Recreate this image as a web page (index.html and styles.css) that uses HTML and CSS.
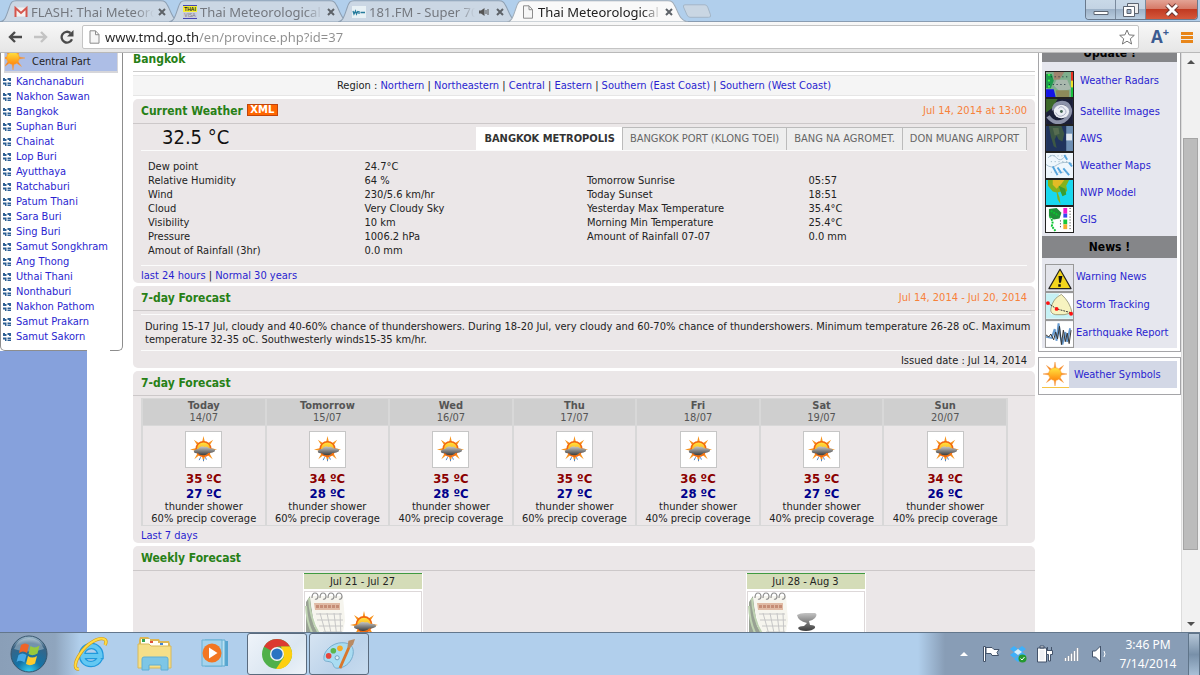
FILE: index.html
```html
<!DOCTYPE html>
<html lang="en">
<head>
    <meta charset="UTF-8">
    <meta name="viewport" content="width=device-width, initial-scale=1.0">
    <title>Thai Meteorological Department</title>
    <link rel="stylesheet" href="styles.css">
</head>
<body>
    <!-- shared icons -->
    <svg class="defs" width="0" height="0">
        <defs>
            <linearGradient id="g-sun" x1="0" y1="0" x2="0" y2="1"><stop offset="0" stop-color="#ffe640"/><stop offset="1" stop-color="#ff8a10"/></linearGradient>
            <linearGradient id="g-cloud" x1="0" y1="0" x2="0" y2="1"><stop offset="0" stop-color="#c4c4c4"/><stop offset="1" stop-color="#3c3c3c"/></linearGradient>
            <radialGradient id="g-orb" cx=".5" cy="1" r="1"><stop offset="0" stop-color="#35d4f5"/><stop offset=".35" stop-color="#1374a8"/><stop offset=".8" stop-color="#3a6384"/><stop offset="1" stop-color="#a9c3d3"/></radialGradient>
        </defs>
        <symbol id="sun" viewBox="0 0 24 24">
            <path d="M12 0l1 6h-2zM12 24l1-6h-2zM0 12l6-1v2zM24 12l-6-1v2zM3.500 3.500l5 3.500-1.500 1.500zM20.500 3.500l-5 3.500 1.500 1.500zM3.500 20.500l5-3.500-1.500-1.500zM20.500 20.500l-5-3.500 1.500-1.500z" fill="#f58220" stroke="#f7a04a" stroke-width=".5"/>
            <circle cx="12" cy="12" r="6.300" fill="url(#g-sun)" stroke="#ff9a1c" stroke-width=".6"/>
        </symbol>
        <symbol id="storm" viewBox="0 0 30 30">
            <path d="M15 1l1.600 7h-3.200zM15 28l1.600-6h-3.200zM1 15l7-1.600v3.200zM29 15l-7-1.600v3.200zM5 5l6.300 4-2.300 2.300zM25 5l-6.300 4 2.300 2.300zM5.500 25l5-4-2-1.500zM24.500 25l-5-4 2-1.500z" fill="#f7931e"/>
            <circle cx="15" cy="14.500" r="7.600" fill="url(#g-sun)" stroke="#f2660e" stroke-width="1.600"/>
            <path d="M5 17c0-2 4-2 5-3 1-2 4-2.500 6-1.500 2-.8 4 0 4.500 1.200 3-.2 6.500.5 6.500 2.300s-5 2.600-7 2.600c-1 1.600-3 2.400-6 2.400-3 0-4-1-4.500-2C7 19 5 18.500 5 17z" fill="url(#g-cloud)"/>
            <path d="M12 23l-1.500 3M17 23l1 2.500M15 25v2" stroke="#4b84c8" stroke-width="1" fill="none"/>
        </symbol>
        <symbol id="squares" viewBox="0 0 8 8">
            <path d="M0 0h2v3H0zM2 1h1.500v2H2zM4.500 0H8v3H6V2H4.500zM0 4.500h3.500V8H2V6.500H0zM4.500 4.500H8V6H4.500zM4.500 6.500H8V8H4.500z" fill="#2c5f93"/>
        </symbol>
        <symbol id="page" viewBox="0 0 11 14">
            <path d="M1 .8h5.500L10 4.500v8.700H1zM6.500.8v3.900H10" fill="#f6f6f6" stroke="#8c8c8c"/>
        </symbol>
        <symbol id="calendar" viewBox="0 0 42 46">
            <path d="M5 4L1 10v36h16L9 34z" fill="#98a193"/>
            <path d="M5 4h33l2 25-3 17H17Q7 28 5 4z" fill="#f6f5ee"/>
            <path d="M4 6Q5 30 17 46M1 14Q2 34 10 46" fill="none" stroke="#bfd3b2" stroke-width="2"/>
            <path d="M9 11h26v7H10z" fill="#e0baa4"/>
            <path d="M11 14.500h23" stroke="#c58d76" stroke-width="3" stroke-dasharray="3 1"/>
            <path d="M11 22h26M12 28h26M14 34h24M18 40h19M15 21l7 25M22 21l5 25M29 21l3 25M35 21l1 25" stroke="#c6c6c6" fill="none"/>
            <g fill="none" stroke="#8f8f8f" stroke-width="1.200"><path d="M7 6q0-5 3-5t3 4q-1 3-3 2"/><path d="M15 6q0-5 3-5t3 4q-1 3-3 2"/><path d="M23 6q0-5 3-5t3 4q-1 3-3 2"/><path d="M31 6q0-5 3-5t3 4q-1 3-3 2"/></g>
        </symbol>
        <symbol id="tab-shape" viewBox="0 0 180 22">
            <path d="M0 22C5 21 6 17 9 8 11 2 12 .8 16 .8H160C164 .8 165 2 168 8 171 15 173 21 180 22z"/>
        </symbol>
    </svg>

    <header class="titlebar">
        <nav class="tabs">
            <div class="tab">
                <svg class="tab-bg" preserveAspectRatio="none" viewBox="0 0 180 22"><use href="#tab-shape"/></svg>
                <svg class="fav" viewBox="0 0 14 12"><path d="M1 1.500h12v9H1z" fill="#f4f0ef"/><path d="M1.500 11V2L7 7l5.500-5v9" fill="none" stroke="#d5564d" stroke-width="2"/></svg>
                <span class="tab-title">FLASH: Thai Meteorological</span>
                <button class="tab-close" aria-label="Close tab"><svg viewBox="0 0 8 8"><path d="M1 1l6 6M7 1L1 7"/></svg></button>
            </div>
            <div class="tab">
                <svg class="tab-bg" preserveAspectRatio="none" viewBox="0 0 180 22"><use href="#tab-shape"/></svg>
                <span class="fav fav-visa"><b>THAI</b><i>VISA</i></span>
                <span class="tab-title">Thai Meteorological</span>
                <button class="tab-close" aria-label="Close tab"><svg viewBox="0 0 8 8"><path d="M1 1l6 6M7 1L1 7"/></svg></button>
            </div>
            <div class="tab">
                <svg class="tab-bg" preserveAspectRatio="none" viewBox="0 0 180 22"><use href="#tab-shape"/></svg>
                <svg class="fav" viewBox="0 0 14 12"><path d="M0 0h14v12H0z" fill="#e8f1f5"/><path d="M1 5l1 3 1.500-3 1 3L6 5M7 5v3M8.500 6.500H13" stroke="#267b9c" stroke-width="1.300" fill="none"/></svg>
                <span class="tab-title">181.FM - Super 70s</span>
                <svg class="speaker" viewBox="0 0 10 10"><path d="M0 3.500h2L5.500 1v8L2 6.500H0z" fill="#555"/><path d="M7 3v4M9 2v6" stroke="#555"/></svg>
                <button class="tab-close" aria-label="Close tab"><svg viewBox="0 0 8 8"><path d="M1 1l6 6M7 1L1 7"/></svg></button>
            </div>
            <div class="tab current">
                <svg class="tab-bg" preserveAspectRatio="none" viewBox="0 0 180 22"><use href="#tab-shape"/></svg>
                <svg class="fav"><use href="#page"/></svg>
                <span class="tab-title">Thai Meteorological</span>
                <button class="tab-close" aria-label="Close tab"><svg viewBox="0 0 8 8"><path d="M1 1l6 6M7 1L1 7"/></svg></button>
            </div>
        </nav>
        <button class="new-tab" aria-label="New tab"><svg viewBox="0 0 30 14"><path d="M3 .8h20q2 0 3 3l2.500 7q1 2.500-2 2.500H8Q6 13.300 5 11L1.500 3Q.8.800 3 .8z" fill="#c9d6e3" stroke="#a3b6c8"/></svg></button>
        <div class="win-buttons">
            <button aria-label="Minimize"><svg viewBox="0 0 16 14"><path d="M1 8.500h14v3H1z" fill="#fff" stroke="#5c6470"/></svg></button>
            <button aria-label="Restore"><svg viewBox="0 0 16 14"><path d="M4.500.5h11v10h-11z" fill="#eee" stroke="#5c6470"/><path d="M.5 3.500h11v10H.5z" fill="#fff" stroke="#5c6470"/><path d="M4 6.500h4v4H4z" fill="#9fb3c9" stroke="#5c6470"/></svg></button>
            <button class="win-close" aria-label="Close"><svg viewBox="0 0 16 14"><path d="M3 2l10 10M13 2L3 12" stroke="#6b3530" stroke-width="5"/><path d="M3 2l10 10M13 2L3 12" stroke="#fff" stroke-width="3"/></svg></button>
        </div>
    </header>

    <div class="toolbar">
        <button aria-label="Back"><svg viewBox="0 0 14 12"><path d="M14 6H2M7 1L2 6l5 5" fill="none" stroke="#4a4a4a" stroke-width="2.400"/></svg></button>
        <button aria-label="Forward"><svg viewBox="0 0 14 12"><path d="M0 6h12M7 1l5 5-5 5" fill="none" stroke="#c3c3c3" stroke-width="2.400"/></svg></button>
        <button aria-label="Reload"><svg viewBox="0 0 14 14"><path d="M12 9.300A5.400 5.400 0 1 1 10.500 3" fill="none" stroke="#4a4a4a" stroke-width="2.300"/><path d="M13.500 0v6.500H7z" fill="#4a4a4a"/></svg></button>
        <div class="address">
            <svg class="page-icon"><use href="#page"/></svg>
            <input type="text" aria-label="Address" value="www.tmd.go.th/en/province.php?id=37">
            <button aria-label="Bookmark"><svg viewBox="0 0 16 16"><path d="M8 1l2.100 4.900 5.200.4-4 3.500 1.300 5.200L8 12.200 3.400 15l1.300-5.200-4-3.500 5.200-.4z" fill="#fff" stroke="#777"/></svg></button>
        </div>
        <button class="font-size" aria-label="Text size">A<sup>+</sup></button>
        <button class="menu-btn" aria-label="Menu"><i></i><i></i><i></i></button>
    </div>

    <div class="viewport">
        <aside class="left">
            <div class="region-box">
                <div class="region-head"><svg><use href="#sun"/></svg>Central Part</div>
                <ul>
                    <li><svg><use href="#squares"/></svg><a href="#">Kanchanaburi</a></li>
                    <li><svg><use href="#squares"/></svg><a href="#">Nakhon Sawan</a></li>
                    <li><svg><use href="#squares"/></svg><a href="#">Bangkok</a></li>
                    <li><svg><use href="#squares"/></svg><a href="#">Suphan Buri</a></li>
                    <li><svg><use href="#squares"/></svg><a href="#">Chainat</a></li>
                    <li><svg><use href="#squares"/></svg><a href="#">Lop Buri</a></li>
                    <li><svg><use href="#squares"/></svg><a href="#">Ayutthaya</a></li>
                    <li><svg><use href="#squares"/></svg><a href="#">Ratchaburi</a></li>
                    <li><svg><use href="#squares"/></svg><a href="#">Patum Thani</a></li>
                    <li><svg><use href="#squares"/></svg><a href="#">Sara Buri</a></li>
                    <li><svg><use href="#squares"/></svg><a href="#">Sing Buri</a></li>
                    <li><svg><use href="#squares"/></svg><a href="#">Samut Songkhram</a></li>
                    <li><svg><use href="#squares"/></svg><a href="#">Ang Thong</a></li>
                    <li><svg><use href="#squares"/></svg><a href="#">Uthai Thani</a></li>
                    <li><svg><use href="#squares"/></svg><a href="#">Nonthaburi</a></li>
                    <li><svg><use href="#squares"/></svg><a href="#">Nakhon Pathom</a></li>
                    <li><svg><use href="#squares"/></svg><a href="#">Samut Prakarn</a></li>
                    <li><svg><use href="#squares"/></svg><a href="#">Samut Sakorn</a></li>
                </ul>
            </div>
            <div class="left-fill"></div>
        </aside>

        <main>
            <h1>Bangkok</h1>
            <div class="regions">Region : <a href="#">Northern</a> | <a href="#">Northeastern</a> | <a href="#">Central</a> | <a href="#">Eastern</a> | <a href="#">Southern (East Coast)</a> | <a href="#">Southern (West Coast)</a></div>

            <section class="panel">
                <div class="panel-head"><h2>Current Weather</h2><a class="xml" href="#">XML</a><span class="date">Jul 14, 2014 at 13:00</span></div>
                <div class="now">
                    <span class="temp">32.5 °C</span>
                    <div class="stations">
                        <button class="active">BANGKOK METROPOLIS</button>
                        <button>BANGKOK PORT (KLONG TOEI)</button>
                        <button>BANG NA AGROMET.</button>
                        <button>DON MUANG AIRPORT</button>
                    </div>
                </div>
                <table class="details">
                    <tr><td>Dew point</td><td>24.7°C</td><td></td><td></td></tr>
                    <tr><td>Relative Humidity</td><td>64 %</td><td>Tomorrow Sunrise</td><td>05:57</td></tr>
                    <tr><td>Wind</td><td>230/5.6 km/hr</td><td>Today Sunset</td><td>18:51</td></tr>
                    <tr><td>Cloud</td><td>Very Cloudy Sky</td><td>Yesterday Max Temperature</td><td>35.4°C</td></tr>
                    <tr><td>Visibility</td><td>10 km</td><td>Morning Min Temperature</td><td>25.4°C</td></tr>
                    <tr><td>Pressure</td><td>1006.2 hPa</td><td>Amount of Rainfall 07-07</td><td>0.0 mm</td></tr>
                    <tr><td>Amout of Rainfall (3hr)</td><td>0.0 mm</td><td></td><td></td></tr>
                </table>
                <div class="more"><a href="#">last 24 hours</a> | <a href="#">Normal 30 years</a></div>
            </section>

            <section class="panel">
                <div class="panel-head"><h2>7-day Forecast</h2><span class="date">Jul 14, 2014 - Jul 20, 2014</span></div>
                <p class="summary">During 15-17 Jul, cloudy and 40-60% chance of thundershowers. During 18-20 Jul, very cloudy and 60-70% chance of thundershowers. Minimum temperature 26-28 oC. Maximum temperature 32-35 oC. Southwesterly winds15-35 km/hr.</p>
                <div class="issued">Issued date : Jul 14, 2014</div>
            </section>

            <section class="panel">
                <div class="panel-head"><h2>7-day Forecast</h2></div>
                <table class="forecast">
                    <thead>
                        <tr>
                            <th>Today<span>14/07</span></th>
                            <th>Tomorrow<span>15/07</span></th>
                            <th>Wed<span>16/07</span></th>
                            <th>Thu<span>17/07</span></th>
                            <th>Fri<span>18/07</span></th>
                            <th>Sat<span>19/07</span></th>
                            <th>Sun<span>20/07</span></th>
                        </tr>
                    </thead>
                    <tbody>
                        <tr>
                            <td><svg><use href="#storm"/></svg><b class="max">35 ºC</b><b class="min">27 ºC</b>thunder shower<br>60% precip coverage</td>
                            <td><svg><use href="#storm"/></svg><b class="max">34 ºC</b><b class="min">28 ºC</b>thunder shower<br>60% precip coverage</td>
                            <td><svg><use href="#storm"/></svg><b class="max">35 ºC</b><b class="min">28 ºC</b>thunder shower<br>40% precip coverage</td>
                            <td><svg><use href="#storm"/></svg><b class="max">35 ºC</b><b class="min">27 ºC</b>thunder shower<br>60% precip coverage</td>
                            <td><svg><use href="#storm"/></svg><b class="max">36 ºC</b><b class="min">28 ºC</b>thunder shower<br>40% precip coverage</td>
                            <td><svg><use href="#storm"/></svg><b class="max">35 ºC</b><b class="min">27 ºC</b>thunder shower<br>40% precip coverage</td>
                            <td><svg><use href="#storm"/></svg><b class="max">34 ºC</b><b class="min">26 ºC</b>thunder shower<br>40% precip coverage</td>
                        </tr>
                    </tbody>
                </table>
                <div class="last-days"><a href="#">Last 7 days</a></div>
            </section>

            <section class="panel weekly">
                <div class="panel-head"><h2>Weekly Forecast</h2></div>
                <div class="weeks">
                    <div class="week">
                        <h3>Jul 21 - Jul 27</h3>
                        <div class="week-pic">
                            <svg class="cal"><use href="#calendar"/></svg>
                            <svg class="sky"><use href="#storm"/></svg>
                        </div>
                    </div>
                    <div class="week">
                        <h3>Jul 28 - Aug 3</h3>
                        <div class="week-pic">
                            <svg class="cal"><use href="#calendar"/></svg>
                            <svg class="sky" viewBox="0 0 30 30"><path d="M5 5q3-2 8-2h10q3 1 0 5-3 3-6 3l1 4q6 0 5 3-3 3-9 3-7 0-8-3 1-2 6-2l3-3Q6 11 5 5z" fill="url(#g-cloud)"/><path d="M9 22l-2 3M13 22v4M17 22l-1 3" stroke="#5b93d6" fill="none"/></svg>
                        </div>
                    </div>
                </div>
            </section>
        </main>

        <aside class="right">
            <div class="link-box">
                <h4 class="cut"><span>Update !</span></h4>
                <ul class="updates">
                    <li><svg viewBox="0 0 28 26"><path fill="#7fae8c" d="M0 0h28v26H0z"/><path fill="#a0836f" d="M8 0h11l-5 8H8z"/><path fill="#a9b8ad" d="M11 8h11l4 10-12 2-6-6z"/><path fill="#1f9a4e" d="M0 2h6l2 7-3 8H0z"/><path fill="#1414e6" d="M0 18h8l2 8H0z"/><path fill="#8c8a5a" d="M10 19h14v7H11z"/><path stroke="#39ff43" stroke-width="2" stroke-dasharray="2 4" d="M3 2v15"/><path stroke="#123" stroke-dasharray="1 3" d="M5 5h18M3 13h20"/><path fill="#ee2c1c" d="M26 0h2v9h-2z"/><path fill="#f3e321" d="M26 9h2v7h-2z"/><path fill="#15c23b" d="M26 16h2v10h-2z"/></svg><a href="#">Weather Radars</a></li>
                    <li><svg viewBox="0 0 28 26"><path fill="#1b1f38" d="M0 0h28v26H0z"/><path fill="#3c6829" d="M0 0h12L7 9l-7 5z"/><path fill="none" stroke="#8d93aa" stroke-width="4" d="M2 18q7 9 16 5 8-5 7-12-2-8-10-7-7 1-7 8"/><ellipse cx="16" cy="13" rx="8" ry="7" fill="#eceef4"/><path fill="none" stroke="#a5aac2" d="M10 14q3 6 8 3t1-7-6 0"/><circle cx="16" cy="13" r="1.500" fill="#465"/></svg><a href="#">Satellite Images</a></li>
                    <li><svg viewBox="0 0 28 26"><path fill="#20345d" d="M0 0h28v26H0z"/><path fill="#3c5744" d="M3 0h13l3 8-2 8-4-2-2-4-2 4 2 9-3-2-3-10z"/><path fill="#566c50" d="M7 2h6l1 6-5 2z"/><path fill="#6e8fb3" d="M21 0h7v26h-7z"/><path fill="#e1e8ee" d="M21 8h6v7h-6z"/></svg><a href="#">AWS</a></li>
                    <li><svg viewBox="0 0 28 26"><path fill="#eef6fc" d="M0 0h28v26H0z"/><path fill="none" stroke="#a7bfd0" d="M2 5q5-5 9 0t9-2M0 12q6 5 12 0 6-4 15-1"/><path fill="none" stroke="#53a4de" stroke-width="2" d="M7 14l5 9M12 15l4 6M19 2l3 5M18 16l6 7M24 10l3 4"/><path fill="none" stroke="#8ab" stroke-dasharray="1 3" d="M4 3h20M5 9h18M5 20h18"/></svg><a href="#">Weather Maps</a></li>
                    <li><svg viewBox="0 0 28 26"><path fill="#18d8ee" d="M0 0h28v26H0z"/><path fill="#85b21c" d="M2 0h22l-3 6 1 5-4 5-3-4-3 1 2 5 1 7-3-5-1-7-4-1-5-6z"/><path fill="#e4bb25" d="M7 0h12l-3 4-5 5-4-4z"/><path fill="#3a9d32" d="M13 6l7 3 1 6-4 2z"/></svg><a href="#">NWP Model</a></li>
                    <li><svg viewBox="0 0 28 26"><path fill="#fff" d="M0 0h28v26H0z"/><path fill="#218e39" d="M3 2l8-1 5 5-2 6-6 1-5-3z"/><path fill="none" stroke="#0cc331" stroke-width="2" stroke-dasharray="2 1" d="M5 4l8 5M4 10l3 5-1 5 4 5"/><path fill="#f119cc" d="M18 1h4v6h-4z"/><path fill="#3648ef" d="M18 7h4v4h-4z"/><path fill="#16c83b" d="M18 13h4v5h-4z"/><path fill="#f4ae30" d="M18 18h4v5h-4z"/><path stroke="#222" stroke-dasharray="1 2" d="M25 1v22M15 14v8"/></svg><a href="#">GIS</a></li>
                </ul>
                <h4>News !</h4>
                <ul class="news">
                    <li><svg viewBox="0 0 28 26"><path fill="#e3e4ea" d="M0 0h28v26H0z"/><path fill="#f3d51c" stroke="#222" stroke-width="1.200" stroke-linejoin="round" d="M14.500 4L26 24H3z"/><path fill="#111" d="M13 11h4l-1.500 7h-2zM12.700 19.500h2.600v2.500h-2.600z"/></svg><a href="#">Warning News</a></li>
                    <li><svg viewBox="0 0 28 26"><path fill="#fff" d="M0 0h28v26H0z"/><path fill="#c6f1f5" d="M0 0h14L4 17l2 9H0zM0 22l28-2v6H0z"/><path fill="#f7f3c0" stroke="#8a8a6a" stroke-width=".8" d="M5 16Q7 5 16 1q9 8 11 19-8 3-17 2-6-1-5-6z"/><path fill="none" stroke="#333" stroke-dasharray="2 1" d="M2 10l9 6 15 4"/><circle cx="2" cy="10" r="2" fill="#f11"/><circle cx="11" cy="16" r="2" fill="#f11"/><circle cx="26" cy="21" r="2" fill="#f11"/></svg><a href="#">Storm Tracking</a></li>
                    <li><svg viewBox="0 0 28 26"><path fill="#fff" d="M0 0h28v26H0z"/><path fill="none" stroke="#679bd0" stroke-width="2" d="M0 16l6 1 3-9 2 12 2-18 2 14 2 8 3-13 2 10 3-14"/><path fill="none" stroke="#333" d="M0 14l3 2 2-3 3 6 2-8 2 7 2-13 2 19 2-15 2 12 2-9 2 11 2-14"/></svg><a href="#">Earthquake Report</a></li>
                </ul>
            </div>
            <div class="link-box symbols">
                <div class="symbols-row"><span class="symbols-icon"><svg><use href="#sun"/></svg></span><a href="#">Weather Symbols</a></div>
            </div>
        </aside>

        <div class="scrollbar">
            <i class="arrow up"></i>
            <div class="track"><div class="thumb"></div></div>
            <i class="arrow down"></i>
        </div>
    </div>

    <footer class="taskbar">
        <button class="start" aria-label="Start"><svg viewBox="0 0 38 38"><circle cx="19" cy="19" r="18" fill="url(#g-orb)" stroke="#35546c"/><path d="M4 14Q8 3 19 3t15 11q-15 5-30 0z" fill="#fff" opacity=".3"/><path d="M11 10q4-3 8 0l-2 8q-4-3-8 0z" fill="#ee6428"/><path d="M20.500 11q4 3 9-.5l-2 8q-5 3-9 .5z" fill="#98c93c"/><path d="M8.500 20q4-3 8 0l-2 7.500q-4-3-8-.5z" fill="#46a9e6"/><path d="M18 21q4 3 9 0l-2 7.500q-5 3-9 .5z" fill="#fecb2e"/></svg></button>
        <button class="ie" aria-label="Internet Explorer"><svg viewBox="0 0 36 36"><path d="M28 22c-2 4-5 6-9 6-6 0-9-4-9-9s4-9 9.500-9c5 0 9 4 9 10H11" fill="none" stroke="#2199dc" stroke-width="6.500"/><path d="M28 22c-2 4-5 6-9 6-6 0-9-4-9-9s4-9 9.500-9c5 0 9 4 9 10H11" fill="none" stroke="#64c8f2" stroke-width="4"/><path d="M7 33c-5 1-5-6 1-15C15 7 27 1 32 3c3 1 2 4 1 6" fill="none" stroke="#d69d17" stroke-width="3.300"/><path d="M7 33c-5 1-5-6 1-15C15 7 27 1 32 3c3 1 2 4 1 6" fill="none" stroke="#ffdb45" stroke-width="2"/></svg></button>
        <button class="explorer" aria-label="Explorer"><svg viewBox="0 0 36 36"><path d="M3 4l1-3h8l2 2h9l1 2h9l1 3v22H3z" fill="#dcb653"/><path d="M5 3h9v5H5zM13 5h9v5h-9zM22 7h10v5H22z" fill="#fffef4"/><path d="M6 3h3v3H6z" fill="#32a653"/><path d="M14 5h3v2h-3z" fill="#e1513c"/><path d="M24 7h3v2h-3z" fill="#4285d5"/><path d="M2 8h11l2 2h20v22H2z" fill="#f5df89" stroke="#d8b95a"/><path d="M6 34V23q0-2 2-2h22q2 0 2 2v11h-7v-5H13v5z" fill="#7dc6e6" stroke="#60aed4"/></svg></button>
        <button class="player" aria-label="Media Player"><svg viewBox="0 0 32 32"><path d="M8 3h20v25H8z" fill="#56a5d0"/><path d="M5 2h20v26H5z" fill="#b9e1f2" stroke="#5eabd1"/><path d="M2 2h20v26H2z" fill="#a5d3ec" stroke="#69b1d3"/><circle cx="12" cy="15" r="9.500" fill="#f27622"/><path d="M9 9.500v11l8.500-5.500z" fill="#fff"/></svg></button>
        <button class="app open" aria-label="Chrome"><svg viewBox="0 0 32 32"><circle cx="16" cy="16" r="15" fill="#4fb04a"/><path d="M16 16L3 8.500A15 15 0 0 1 29 8.500H16z" fill="#dc3a30"/><path d="M29 8.500A15 15 0 0 1 15 31l8-12-3-10.500z" fill="#fdcf10"/><circle cx="16" cy="16" r="7" fill="#f4f4f4"/><circle cx="16" cy="16" r="5.600" fill="#2a73c2"/></svg></button>
        <button class="app" aria-label="Paint"><svg viewBox="0 0 34 34"><path d="M1 22C0 14 10 5 20 5s13 5 12 12-7 14-15 15c-7 1-5-4-8-6s-8 0-8-4z" fill="#a9dcf2" stroke="#72aacb"/><circle cx="6" cy="19" r="3" fill="#e7453c"/><circle cx="11" cy="13.500" r="3" fill="#5bb64d"/><circle cx="18" cy="11" r="3" fill="#f6ab28"/><circle cx="15" cy="21" r="2.200" fill="#dceef6" stroke="#6e9dbb"/><path d="M28 9L18 32" stroke="#d9772b" stroke-width="3"/><path d="M26 9l1-6 7-2-2 6-4 4z" fill="#b98a63"/></svg></button>

        <div class="tray">
            <i class="tray-up"></i>
            <svg viewBox="0 0 18 18"><path d="M1.500 1.500h2v15h-2z" fill="#fff" stroke="#43536a"/><path d="M4 2.500h6l2 2h5l-2 3 1.500 3H10l-1-2H4z" fill="#fff" stroke="#43536a"/></svg>
            <svg viewBox="0 0 18 18"><path d="M5 1l4 3-4 3-4-3zM13 1l4 3-4 3-4-3zM5 7l4 3-4 3-4-3zM13 7l4 3-4 3-4-3zM9 11l4 3-4 3-4-3z" fill="#3fb0fa"/><path d="M9 4l4 3-4 3-4-3z" fill="#d6effc"/><circle cx="13.500" cy="13.500" r="4" fill="#24992f"/><path d="M11.500 13.500l1.500 1.500 2.500-3" fill="none" stroke="#fff"/></svg>
            <svg viewBox="0 0 18 18"><path d="M4 1h4v2H4zM1.500 3h9v14h-9z" fill="#fff" stroke="#43536a"/><path d="M3.500 5h5v10h-5z" fill="#eef1f5"/><path d="M10.500 5.500h6v4h-2v6.500h-2V9.500h-2zM11.500 2v3M15.500 2v3" fill="#fff" stroke="#43536a"/></svg>
            <svg viewBox="0 0 18 18"><path d="M2.500 13v3M5.500 11v5M8.500 8.500V16M11.500 6v10M14.500 3v13" stroke="#43536a" stroke-width="3"/><path d="M2.500 13v3M5.500 11v5M8.500 8.500V16M11.500 6v10M14.500 3v13" stroke="#fff" stroke-width="2"/></svg>
            <svg viewBox="0 0 18 18"><path d="M2.500 6h3l5-5v16l-5-5h-3z" fill="#fff" stroke="#43536a"/><path d="M14 6q2 3 0 6" fill="none" stroke="#fff"/></svg>
        </div>
        <div class="clock">3:46 PM<br>7/14/2014</div>
        <button class="show-desktop" aria-label="Show desktop"></button>
    </footer>
</body>
</html>
```
FILE: styles.css
```css
*{
    margin: 0;
    padding: 0;
    box-sizing: border-box;
}
body{
    height: 100vh;
    display: flex;
    flex-direction: column;
    overflow: hidden;
    background: #fff;
    font: 11px/14px "DejaVu Sans Condensed", Tahoma, sans-serif;
    color: #222;
}
.defs{
    position: absolute;
}
ul{
    list-style: none;
}
a{
    color: #2a1fd0;
    text-decoration: none;
}
button{
    border: 0;
    background: none;
    font: inherit;
    color: inherit;
}
svg{
    display: block;
    flex: none;
}

/* window title and tabs */
.titlebar{
    flex: none;
    height: 22px;
    display: flex;
    align-items: flex-start;
    background: #b1cfec;
    border-bottom: 1px solid #8a9db2;
    font: 13px/18px "Noto Sans", "Open Sans", sans-serif;
}
.tabs{
    display: flex;
}
.tab{
    position: relative;
    width: 181px;
    height: 22px;
    margin-right: -12px;
    padding: 2px 15px 0 14px;
    display: flex;
    align-items: center;
    color: #74787f;
}
.tab:last-child{
    margin-right: 0;
}
.tab-bg{
    position: absolute;
    left: 0;
    top: 0;
    width: 100%;
    height: 100%;
    fill: #cbd7e4;
    stroke: #8d9fb2;
}
.current{
    color: #222;
}
.current .tab-bg{
    fill: #f9f9f9;
    stroke: #a2adb8;
}
.fav{
    position: relative;
    width: 14px;
    height: 14px;
    margin-right: 3px;
}
.fav-visa{
    background: #f4ee34;
    border-top: 1px solid #4646b4;
    border-bottom: 1px solid #4646b4;
    font: 5px/6px "Liberation Sans", sans-serif;
    text-align: center;
    color: #222;
}
.fav-visa b, .fav-visa i{
    display: block;
    font-style: normal;
}
.fav-visa i{
    background: #ccd;
    color: #777;
}
.tab-title{
    position: relative;
    flex: 1;
    min-width: 0;
    overflow: hidden;
    white-space: nowrap;
    -webkit-mask-image: linear-gradient(to right, #000 85%, transparent);
    mask-image: linear-gradient(to right, #000 85%, transparent);
}
.tab-close{
    position: relative;
    margin: 0 0 0 4px;
}
.tab-close svg{
    width: 8px;
    height: 8px;
    stroke: #5d6268;
    stroke-width: 2;
}
.speaker{
    position: relative;
    width: 10px;
    height: 10px;
    margin: 0 3px 0 4px;
}
.new-tab{
    margin: 4px 0 0 -6px;
}
.new-tab svg{
    width: 30px;
    height: 14px;
}
.win-buttons{
    margin: 0 2px 0 auto;
    display: flex;
    border: 1px solid #69798c;
    border-top: 0;
    border-radius: 0 0 4px 4px;
    overflow: hidden;
}
.win-buttons button{
    width: 30px;
    height: 19px;
    display: flex;
    justify-content: center;
    align-items: center;
    background: linear-gradient(#c9d9e8, #c3d3e3 45%, #9db2c8 50%, #b9cde0);
    border-right: 1px solid #7a8a9d;
}
.win-buttons .win-close{
    width: 51px;
    border: 0;
    background: linear-gradient(#e3a395, #d67b69 45%, #c13a22 50%, #d5583b);
}
.win-buttons svg{
    width: 16px;
    height: 14px;
}

/* toolbar */
.toolbar{
    flex: none;
    height: 31px;
    padding: 0 7px 0 8px;
    display: flex;
    align-items: center;
    gap: 12px;
    background: linear-gradient(#f8f8f8, #e6e6e6);
    border-bottom: 1px solid #b9b9b9;
}
.toolbar > button svg{
    width: 14px;
    height: 14px;
}
.address{
    flex: 1;
    height: 24px;
    margin-left: -4px;
    padding: 0 3px 0 6px;
    display: flex;
    align-items: center;
    gap: 5px;
    background: #fff;
    border: 1px solid #c4c4c4;
    border-radius: 2px;
}
.page-icon{
    width: 11px;
    height: 14px;
}
.address input{
    flex: 1;
    min-width: 0;
    border: 0;
    outline: 0;
    font: 13px/20px "Noto Sans", "Open Sans", sans-serif;
    /* host dark, path grey */
    color: transparent;
    background: linear-gradient(to right, #222 94px, #8f8f8f 94px);
    -webkit-background-clip: text;
    background-clip: text;
}
.address svg{
    height: 16px;
}
.address button svg{
    width: 16px;
}
.font-size{
    font: bold 17px/20px "Open Sans", sans-serif;
    color: #3a5a90;
    white-space: nowrap;
}
.font-size sup{
    font-size: 11px;
    line-height: 1px;
}
.menu-btn i{
    display: block;
    width: 12px;
    height: 3px;
    margin: 1px 0;
    background: #e8861a;
}

/* page area */
.viewport{
    flex: 1;
    min-height: 0;
    display: flex;
    overflow: hidden;
}
.left{
    flex: none;
    width: 123px;
    display: flex;
    flex-direction: column;
}
.region-box{
    position: relative;
    height: 298px;
    background: #fff;
    border: 1px solid #8d8d8d;
    border-top: 0;
    border-radius: 0 0 5px 5px;
}
.region-box::after{
    /* gap in the bottom line */
    content: "";
    position: absolute;
    left: 86px;
    bottom: -1px;
    width: 23px;
    height: 1px;
    background: #fff;
}
.region-head{
    height: 20px;
    margin: 0 4px 1px 3px;
    display: flex;
    align-items: center;
    gap: 7px;
    background: #adbee6;
    border: solid #d6d6da;
    border-width: 0 1px 2px 1px;
    overflow: hidden;
}
.region-head svg{
    width: 24px;
    height: 24px;
    margin: -8px 0 0 -4px;
}
.region-box li{
    height: 15px;
    padding-left: 2px;
    display: flex;
    align-items: center;
    gap: 5px;
}
.region-box li svg{
    width: 8px;
    height: 8px;
}
.left-fill{
    flex: 1;
    width: 87px;
    background: #86a1dc;
}

main{
    flex: 1;
    min-width: 0;
    margin: 0 3px 0 10px;
    display: flex;
    flex-direction: column;
    gap: 3px;
}
h1{
    flex: none;
    height: 19px;
    border-bottom: 1px solid #ccc;
    font-size: 12px;
    line-height: 12px;
    color: #278016;
}
.regions{
    flex: none;
    height: 21px;
    line-height: 20px;
    text-align: center;
    background: #f5f5f5;
    border-top: 1px solid #e6e6e6;
    border-bottom: 1px solid #e6e6e6;
}
.panel{
    flex: none;
    background: #ebe7e8;
    border-radius: 5px;
}
.panel-head{
    height: 25px;
    padding: 0 8px;
    display: flex;
    align-items: center;
    border-bottom: 1px solid #ccc8c9;
}
h2{
    font-size: 12px;
    line-height: 16px;
    color: #278016;
}
.xml{
    width: 31px;
    height: 12px;
    margin: 0 0 2px 4px;
    background: #f60;
    border: 1px solid #c0450c;
    font: bold 10px/10px "DejaVu Sans", sans-serif;
    text-align: center;
    color: #fff;
}
.date{
    margin-left: auto;
    color: #f7813a;
}
.now{
    height: 27px;
    margin: 0 8px;
    padding-left: 21px;
    display: flex;
    justify-content: space-between;
    align-items: flex-end;
    border-bottom: 1px solid #fbfbfb;
}
.temp{
    font-size: 20px;
    line-height: 26px;
    color: #111;
}
.stations{
    display: flex;
}
.stations button{
    height: 23px;
    padding: 0 7px;
    background: #eee;
    border: 1px solid #bbb;
    border-width: 1px 0 0 1px;
    color: #666;
    white-space: nowrap;
}
.stations button:last-child{
    border-right-width: 1px;
}
.stations .active{
    background: #fff;
    border-color: #fff;
    font-weight: bold;
    color: #333;
}
.details{
    width: calc(100% - 16px);
    margin: 9px 8px 7px;
    table-layout: fixed;
    border-collapse: collapse;
}
.details td{
    width: 25%;
    height: 14px;
    padding-left: 3px;
}
.details td:first-child{
    padding-left: 7px;
}
.details td:nth-child(2){
    padding-left: 2px;
}
.more, .last-days{
    margin: 0 8px;
    height: 18px;
    line-height: 20px;
}
.more{
    border-top: 1px solid #fbfbfb;
}
.summary{
    margin: 3px 4px 0 8px;
    padding: 5px 0 4px 4px;
    line-height: 13px;
    border-top: 1px solid #fbfbfb;
    border-bottom: 1px solid #fbfbfb;
}
.issued{
    height: 17px;
    padding-right: 8px;
    line-height: 20px;
    text-align: right;
}
.forecast{
    width: calc(100% - 35px);
    margin: 2px 8px 0;
    table-layout: fixed;
    border-collapse: collapse;
    line-height: 12px;
    text-align: center;
}
.forecast th, .forecast td{
    border: 1px solid #d8d8d8;
    border-width: 1px 2px;
}
.forecast th{
    height: 27px;
    background: #cfcfcf;
    color: #555;
}
.forecast th span{
    display: block;
    font-weight: normal;
}
.forecast td{
    padding: 5px 0 0;
    white-space: nowrap;
}
.forecast svg{
    width: 37px;
    height: 37px;
    margin: 0 auto 3px;
    padding: 3px;
    background: #fff;
    border: 1px solid #c6c6c6;
}
.forecast b{
    display: block;
    font-size: 13px;
    line-height: 15px;
}
.max{
    color: #8b0000;
}
.min{
    color: #00008b;
}
.last-days{
    height: 17px;
}
.weeks{
    padding: 2px 8px 0;
    display: grid;
    grid-template-columns: 1fr 1fr;
    justify-items: center;
}
.week{
    width: 120px;
    padding: 0 1px;
    background: #fff;
}
.week h3{
    height: 16px;
    margin-bottom: 2px;
    background: #d4dcb8;
    border-top: 1px solid #3f9a3f;
    font-size: 11px;
    font-weight: normal;
    line-height: 15px;
    text-align: center;
}
.week-pic{
    height: 90px;
    display: flex;
    border: 1px solid #ddd8d9;
}
.cal{
    width: 42px;
    height: 46px;
}
.sky{
    width: 30px;
    height: 30px;
    margin: 18px 0 0 2px;
}

/* right column */
.right{
    flex: none;
    width: 143px;
}
.link-box{
    padding: 0 3px 3px;
    background: #fff;
    border: 1px solid #a5a5a8;
    border-top: 0;
}
.link-box h4{
    height: 22px;
    background: #858689;
    font-size: 12px;
    line-height: 22px;
    text-align: center;
    color: #000;
}
.link-box .cut{
    height: 9px;
    display: flex;
    justify-content: center;
    align-items: flex-end;
    overflow: hidden;
    line-height: 18px;
}
.link-box ul{
    padding: 9px 3px 3px;
    background: #e6e7ee;
}
.link-box li{
    height: 27px;
    display: flex;
    align-items: flex-start;
    line-height: 27px;
    gap: 6px;
}
.updates li:first-child{
    line-height: 20px;
}
.link-box li svg{
    width: 29px;
    height: 27px;
    border: 1px solid #222;
}
.link-box .news{
    padding: 6px 3px 0;
}
.link-box .news li{
    height: 28px;
    gap: 2px;
    line-height: 26px;
}
.link-box .news svg{
    height: 28px;
    border-color: #999;
}
.symbols{
    margin-top: 5px;
    padding: 3px 3px 6px;
    border-top: 1px solid #a5a5a8;
}
.symbols-row{
    display: flex;
    align-items: center;
    height: 27px;
    background: #d3d8e6;
}
.symbols-icon{
    width: 27px;
    height: 27px;
    margin-right: 5px;
    padding: 1px;
    background: #fff;
    border-bottom: 1px solid #f6c445;
}
.symbols-icon svg{
    width: 24px;
    height: 24px;
}

.scrollbar{
    flex: none;
    width: 19px;
    padding: 7px 2px 6px 1px;
    display: flex;
    flex-direction: column;
    align-items: center;
    background: #f1f1f1;
    border-left: 1px solid #dcdcdc;
}
.track{
    flex: 1;
    width: 100%;
    margin: 10px 0 11px;
    display: flex;
    flex-direction: column;
    padding-top: 64px;
}
.thumb{
    height: 87%;
    background: #bcbcbc;
    border: 1px solid #a5a5a5;
}
.arrow{
    border: 4px solid transparent;
    border-top-width: 0;
    border-bottom: 4px solid #505050;
}
.arrow.down{
    border-top: 4px solid #505050;
    border-bottom-width: 0;
}

/* taskbar */
.taskbar{
    flex: none;
    height: 43px;
    display: flex;
    align-items: center;
    background: linear-gradient(to right, #8a9fb8, #8fa5be 55px, #b1cfec 80px, #b1cfec calc(100% - 282px), #889db6 calc(100% - 255px), #889db6);
    border-top: 1px solid #63778c;
}
.taskbar button{
    display: flex;
    align-items: center;
    justify-content: center;
}
.start{
    width: 58px;
}
.start svg{
    width: 38px;
    height: 38px;
}
.ie, .explorer{
    width: 64px;
}
.ie svg, .explorer svg{
    width: 36px;
    height: 36px;
}
.player{
    width: 59px;
}
.player svg, .app svg{
    width: 32px;
    height: 34px;
}
.app{
    width: 60px;
    height: 42px;
    margin-left: 2px;
    background: linear-gradient(135deg, #d6e4f2, #bcd3ea 60%, #c8dcef);
    border: 1px solid #5a6b7e;
    border-radius: 3px;
}
.app.open{
    background: linear-gradient(135deg, #eff4fa, #dbe6f1 60%, #edf3f9);
}
.tray{
    margin-left: auto;
    display: flex;
    align-items: center;
    gap: 9px;
}
.tray svg{
    width: 18px;
    height: 18px;
}
.tray-up{
    margin-right: 5px;
    border: 4px solid transparent;
    border-top-width: 0;
    border-bottom: 4px solid #fff;
}
.clock{
    width: 80px;
    font: 12px/19px "Noto Sans", "Open Sans", sans-serif;
    text-align: center;
    color: #fff;
}
.show-desktop{
    width: 12px;
    height: 42px;
    border: 1px solid #5f7489;
    border-bottom: 0;
    background: linear-gradient(#b5c6d7, #7890a9 50%, #a8bfd6);
}
```
